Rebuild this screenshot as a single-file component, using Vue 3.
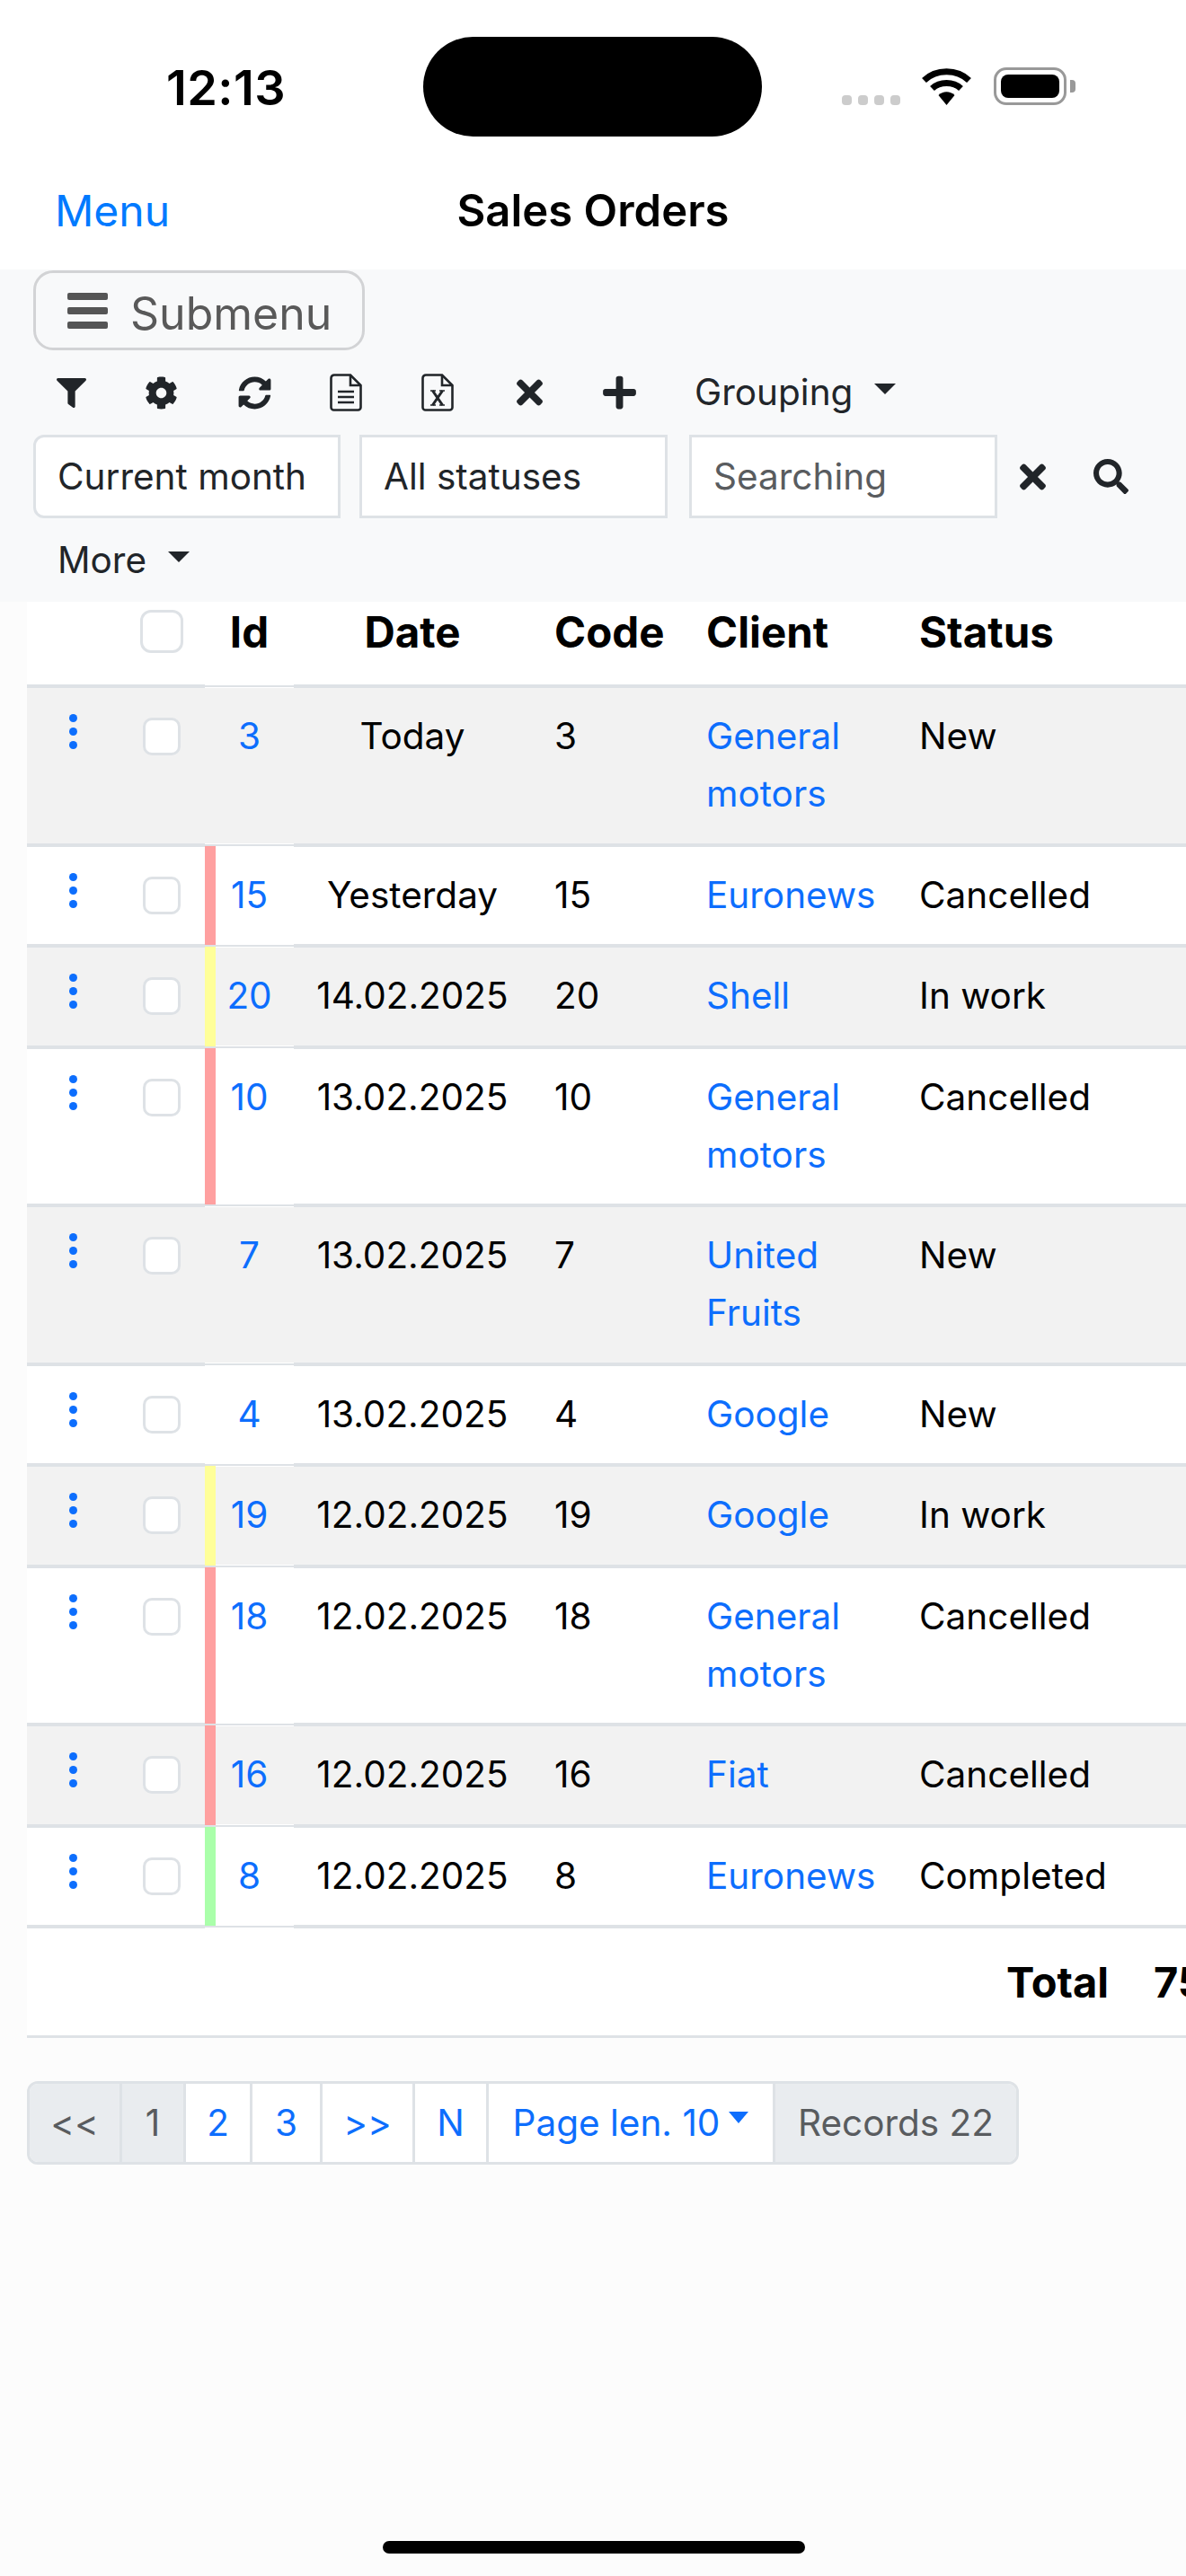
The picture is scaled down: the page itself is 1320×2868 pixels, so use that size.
<script setup>
const icons = {
  filter: { box: '0 0 512 512', d: 'M487.976 0H24.028C2.71 0-8.047 25.866 7.058 40.971L192 225.941V432c0 7.831 3.821 15.17 10.237 19.662l80 55.98C298.02 518.69 320 507.493 320 487.98V225.941l184.947-184.97C520.021 25.896 509.338 0 487.976 0z' },
  cog: { box: '0 0 512 512', d: 'M487.4 315.7l-42.6-24.6c4.3-23.2 4.3-47 0-70.2l42.6-24.6c4.9-2.8 7.1-8.6 5.5-14-11.1-35.6-30-67.8-54.7-94.6-3.8-4.1-10-5.1-14.8-2.3L380.8 110c-17.9-15.4-38.5-27.3-60.8-35.1V25.8c0-5.6-3.9-10.5-9.4-11.7-36.7-8.2-74.3-7.8-109.2 0-5.5 1.2-9.4 6.1-9.4 11.7V75c-22.2 7.9-42.8 19.8-60.8 35.1L88.7 85.5c-4.9-2.8-11-1.9-14.8 2.3-24.7 26.7-43.6 58.9-54.7 94.6-1.7 5.4.6 11.2 5.5 14L67.3 221c-4.3 23.2-4.3 47 0 70.2l-42.6 24.6c-4.9 2.8-7.1 8.6-5.5 14 11.1 35.6 30 67.8 54.7 94.6 3.8 4.1 10 5.1 14.8 2.3l42.6-24.6c17.9 15.4 38.5 27.3 60.8 35.1v49.2c0 5.6 3.9 10.5 9.4 11.7 36.7 8.2 74.3 7.8 109.2 0 5.5-1.2 9.4-6.1 9.4-11.7v-49.2c22.2-7.9 42.8-19.8 60.8-35.1l42.6 24.6c4.9 2.8 11 1.9 14.8-2.3 24.7-26.7 43.6-58.9 54.7-94.6 1.5-5.5-.7-11.3-5.6-14.1zM256 336c-44.1 0-80-35.9-80-80s35.9-80 80-80 80 35.9 80 80-35.9 80-80 80z' },
  sync: { box: '0 0 512 512', d: 'M370.72 133.28C339.458 104.008 298.888 87.962 255.848 88c-77.458.068-144.328 53.178-162.791 126.85-1.344 5.363-6.122 9.15-11.651 9.15H24.103c-7.498 0-13.194-6.807-11.807-14.176C33.933 94.924 134.813 8 256 8c66.448 0 126.791 26.136 171.315 68.685L463.03 40.97C478.149 25.851 504 36.559 504 57.941V192c0 13.255-10.745 24-24 24H345.941c-21.382 0-32.09-25.851-16.971-40.971l41.75-41.749zM32 296h134.059c21.382 0 32.09 25.851 16.971 40.971l-41.75 41.75c31.262 29.273 71.835 45.319 114.876 45.28 77.418-.07 144.315-53.144 162.787-126.849 1.344-5.363 6.122-9.15 11.651-9.15h57.304c7.498 0 13.194 6.807 11.807 14.176C478.067 417.076 377.187 504 256 504c-66.448 0-126.791-26.136-171.315-68.685L48.97 471.03C33.851 486.149 8 475.441 8 454.059V320c0-13.255 10.745-24 24-24z' },
  times: { box: '0 0 352 512', d: 'M242.72 256l100.07-100.07c12.28-12.28 12.28-32.19 0-44.48l-22.24-22.24c-12.28-12.28-32.19-12.28-44.48 0L176 189.28 75.93 89.21c-12.28-12.28-32.19-12.28-44.48 0L9.21 111.45c-12.28 12.28-12.28 32.19 0 44.48L109.28 256 9.21 356.07c-12.28 12.28-12.28 32.19 0 44.48l22.24 22.24c12.28 12.28 32.2 12.28 44.48 0L176 322.72l100.07 100.07c12.28 12.28 32.2 12.28 44.48 0l22.24-22.24c12.28-12.28 12.28-32.19 0-44.48L242.72 256z' },
  plus: { box: '0 0 448 512', d: 'M416 208H272V64c0-17.67-14.33-32-32-32h-32c-17.67 0-32 14.33-32 32v144H32c-17.67 0-32 14.33-32 32v32c0 17.67 14.33 32 32 32h144v144c0 17.67 14.33 32 32 32h32c17.67 0 32-14.33 32-32V304h144c17.67 0 32-14.33 32-32v-32c0-17.67-14.33-32-32-32z' },
  search: { box: '0 0 512 512', d: 'M505 442.7L405.3 343c-4.5-4.5-10.6-7-17-7H372c27.6-35.3 44-79.7 44-128C416 93.1 322.9 0 208 0S0 93.1 0 208s93.1 208 208 208c48.3 0 92.7-16.4 128-44v16.3c0 6.4 2.5 12.5 7 17l99.7 99.7c9.4 9.4 24.6 9.4 33.9 0l28.3-28.3c9.4-9.4 9.4-24.6.1-34zM208 336c-70.7 0-128-57.2-128-128 0-70.7 57.2-128 128-128 70.7 0 128 57.2 128 128 0 70.7-57.2 128-128 128z' },
}

const rows = [
  { id: 3, date: 'Today', client: 'General motors', status: 'New', mark: '' },
  { id: 15, date: 'Yesterday', client: 'Euronews', status: 'Cancelled', mark: 'red' },
  { id: 20, date: '14.02.2025', client: 'Shell', status: 'In work', mark: 'yellow' },
  { id: 10, date: '13.02.2025', client: 'General motors', status: 'Cancelled', mark: 'red' },
  { id: 7, date: '13.02.2025', client: 'United Fruits', status: 'New', mark: '' },
  { id: 4, date: '13.02.2025', client: 'Google', status: 'New', mark: '' },
  { id: 19, date: '12.02.2025', client: 'Google', status: 'In work', mark: 'yellow' },
  { id: 18, date: '12.02.2025', client: 'General motors', status: 'Cancelled', mark: 'red' },
  { id: 16, date: '12.02.2025', client: 'Fiat', status: 'Cancelled', mark: 'red' },
  { id: 8, date: '12.02.2025', client: 'Euronews', status: 'Completed', mark: 'green' },
]

const pages = [
  { label: '<<', cls: 'off', w: 103 },
  { label: '1', cls: 'off', w: 71 },
  { label: '2', cls: '', w: 74 },
  { label: '3', cls: '', w: 78 },
  { label: '>>', cls: '', w: 103 },
  { label: 'N', cls: '', w: 82 },
]
</script>

<template>
  <div class="page">
    <div class="status-bar">
      <span class="time">12:13</span>
      <div class="island"></div>
      <div class="signal"><i></i><i></i><i></i><i></i></div>
      <svg class="wifi" viewBox="0 0 57 42" aria-hidden="true">
        <path d="M3.5 14.5C17 1.5 40 1.5 53.5 14.5" fill="none" stroke="#000" stroke-width="7" />
        <path d="M12.5 23.5C21 15.5 36 15.5 44.5 23.5" fill="none" stroke="#000" stroke-width="7" />
        <path d="M19.5 31C24.5 26 32.5 26 37.5 31L28.5 42Z" fill="#000" />
      </svg>
      <div class="battery"><div class="battery-fill"></div></div>
      <div class="battery-cap"></div>
    </div>

    <div class="nav">
      <a class="nav-menu">Menu</a>
      <span class="nav-title">Sales Orders</span>
    </div>

    <div class="toolbar">
      <button class="submenu">
        <span class="burger"><i></i><i></i><i></i></span>
        <span class="submenu-label">Submenu</span>
      </button>

      <div class="tools">
        <span class="tool"><svg class="ic-33" :viewBox="icons.filter.box"><path :d="icons.filter.d" /></svg></span>
        <span class="tool"><svg class="ic-37 nudge" :viewBox="icons.cog.box"><path :d="icons.cog.d" /></svg></span>
        <span class="tool"><svg class="ic-37" :viewBox="icons.sync.box"><path :d="icons.sync.d" /></svg></span>
        <span class="tool">
          <svg class="doc" viewBox="0 0 36 42">
            <path d="M5 1.5H23L34.5 13V37.5a3 3 0 0 1-3 3H4.500a3 3 0 0 1-3-3V5a3.500 3.500 0 0 1 3.500-3.500Z" fill="none" stroke="#212529" stroke-width="2.600" />
            <path d="M23 1.500V13H34.500" fill="none" stroke="#212529" stroke-width="2.600" />
            <path d="M9 20H27M9 26H27M9 32H27" stroke="#212529" stroke-width="2.600" />
          </svg>
        </span>
        <span class="tool">
          <svg class="doc" viewBox="0 0 36 42">
            <path d="M5 1.5H23L34.5 13V37.5a3 3 0 0 1-3 3H4.500a3 3 0 0 1-3-3V5a3.500 3.500 0 0 1 3.500-3.500Z" fill="none" stroke="#212529" stroke-width="2.600" />
            <path d="M23 1.500V13H34.500" fill="none" stroke="#212529" stroke-width="2.600" />
            <path d="M12.500 19L23.500 35M23.500 19L12.500 35" stroke="#212529" stroke-width="3" />
            <path d="M10 19H16M20 19H26M10 35H16M20 35H26" stroke="#212529" stroke-width="1.600" />
          </svg>
        </span>
        <span class="tool"><svg class="ic-x" :viewBox="icons.times.box"><path :d="icons.times.d" /></svg></span>
        <span class="tool"><svg class="ic-plus nudge" :viewBox="icons.plus.box"><path :d="icons.plus.d" /></svg></span>
        <button class="drop grouping">Grouping<i class="caret"></i></button>
      </div>

      <div class="filters">
        <div class="field first">Current month</div>
        <div class="field second">All statuses</div>
        <div class="field third placeholder">Searching</div>
        <span class="clear"><svg class="ic-x2" :viewBox="icons.times.box"><path :d="icons.times.d" /></svg></span>
        <span class="find"><svg class="ic-search" :viewBox="icons.search.box"><path :d="icons.search.d" /></svg></span>
      </div>

      <div class="more-row">
        <button class="drop">More<i class="caret"></i></button>
      </div>
    </div>

    <div class="table">
      <div class="row head">
        <div class="c-act"></div>
        <div class="c-chk"><span class="check big"></span></div>
        <div class="c-id">Id</div>
        <div class="c-date">Date</div>
        <div class="c-code">Code</div>
        <div class="c-client">Client</div>
        <div class="c-status">Status</div>
      </div>

      <div v-for="(r, i) in rows" :key="r.id" class="row body" :class="{ striped: i % 2 === 0 }">
        <div class="c-act">
          <span class="dots"><i></i><i></i><i></i></span>
        </div>
        <div class="c-chk"><span class="check"></span></div>
        <div class="c-id" :class="r.mark"><a>{{ r.id }}</a></div>
        <div class="c-date">{{ r.date }}</div>
        <div class="c-code">{{ r.id }}</div>
        <div class="c-client"><a>{{ r.client }}</a></div>
        <div class="c-status">{{ r.status }}</div>
      </div>

      <div class="total">
        <span>Total</span>
        <span class="sum">75</span>
      </div>
    </div>

    <div class="pager">
      <span
        v-for="p in pages"
        :key="p.label"
        class="pg"
        :class="p.cls"
        :style="{ width: p.w + 'px' }"
      >{{ p.label }}</span>
      <span class="pg len">Page len. 10<i class="caret blue"></i></span>
      <span class="pg off rec">Records 22</span>
    </div>

    <div class="home"></div>
  </div>
</template>

<style>
html, body { margin: 0; background: #fcfcfc; }
</style>

<style scoped>
* { box-sizing: border-box; }
.page {
  width: 1320px;
  height: 2868px;
  overflow: hidden;
  display: flex;
  flex-direction: column;
  background: #fcfcfc;
  font-family: Inter, "Liberation Sans", sans-serif;
  font-size: 40.5px;
  color: #000;
}
button { font: inherit; background: none; border: 0; padding: 0; color: inherit; }
i { display: block; }

/* status bar */
.status-bar { height: 180px; background: #fff; display: flex; align-items: flex-start; flex: none; }
.time { margin: 66px 0 0 185px; width: 286px; font-size: 54px; line-height: 64px; font-weight: 600; letter-spacing: 0.4px; }
.island { width: 377px; height: 111px; margin-top: 41px; border-radius: 56px; background: #000; }
.signal { display: flex; gap: 7px; margin: 106px 0 0 89px; }
.signal i { width: 11px; height: 11px; border-radius: 4px; background: #ccc; }
.wifi { width: 57px; height: 42px; margin: 75px 0 0 23px; }
.battery { width: 81px; height: 42px; margin: 75px 0 0 24px; padding: 5px; border: 3px solid #999; border-radius: 14px; }
.battery-fill { width: 100%; height: 100%; border-radius: 8px; background: #000; }
.battery-cap { width: 6px; height: 14px; margin: 89px 0 0 4px; border-radius: 0 4px 4px 0; background: #999; }

/* nav */
.nav { height: 120px; padding-bottom: 10px; background: #fff; display: flex; align-items: center; position: relative; flex: none; }
.nav-menu { margin-left: 61px; font-size: 48px; line-height: 60px; color: #007aff; }
.nav-title { position: absolute; left: 0; right: 0; text-align: center; font-size: 49px; line-height: 60px; font-weight: 600; }

/* toolbar */
.toolbar { height: 370px; padding: 1px 0 0 37px; background: #f8f9fa; color: #212529; flex: none; }
.submenu {
  display: flex; align-items: center; gap: 25px;
  width: 369px; height: 89px; padding-left: 35px;
  border: 3px solid #d2d3d5; border-radius: 22px;
  font-size: 50px; color: #595959;
}
.submenu-label { position: relative; top: 3px; }
.burger { display: flex; flex-direction: column; gap: 8px; width: 45px; }
.burger i { height: 8px; border-radius: 2px; background: #555; }

.tools { display: flex; align-items: center; height: 94px; margin-left: -9px; }
.tool { width: 102px; display: flex; justify-content: center; align-items: center; }
.tool svg { fill: #212529; display: block; }
.ic-33 { width: 33px; height: 33px; }
.ic-37 { width: 37px; height: 37px; }
.nudge { margin-right: 3px; }
.ic-x { width: 29px; height: 42px; }
.ic-plus { width: 37px; height: 42px; }
.doc { width: 36px; height: 42px; }
.drop { display: flex; align-items: center; font-size: 40.5px; line-height: 60px; color: #212529; }
.grouping { margin-left: 31px; }
.caret {
  width: 0; height: 0; margin-left: 24px; margin-top: -8px;
  border-left: 12px solid transparent; border-right: 12px solid transparent; border-top: 12px solid #212529;
}
.caret.blue { margin-left: 10px; margin-top: -12px; border-left-width: 11px; border-right-width: 11px; border-top: 13px solid #0d6efd; }

.filters { display: flex; align-items: center; }
.field {
  height: 93px; width: 343px; padding: 0 24px; line-height: 87px;
  background: #fff; border: 3px solid #dee2e6; white-space: nowrap;
}
.first { width: 342px; border-radius: 12px 0 0 12px; }
.second { margin-left: 21px; }
.third { margin-left: 24px; }
.placeholder { color: #595c5f; }
.clear { width: 79px; display: flex; justify-content: center; }
.find { width: 95px; display: flex; justify-content: center; }
.clear svg, .find svg { fill: #212529; display: block; }
.ic-x2 { width: 29px; height: 42px; }
.ic-search { width: 39px; height: 39px; }
.more-row { height: 93px; display: flex; align-items: center; padding-left: 27px; }

/* table */
.table { margin-left: 30px; background: #fff; overflow: hidden; flex: none; }
.row {
  display: grid;
  grid-template-columns: 108px 90px 99px 264px 179px 237px 313px;
  border-bottom: 4px solid #dee2e6;
}
.head { height: 96px; font-weight: 700; font-size: 47.5px; line-height: 68px; }
.body { line-height: 64px; }
.striped { background: #f2f2f2; }
.body > div { padding: 22px 0 22.5px; }
.c-act { display: flex; justify-content: flex-end; }
.body .c-act { padding: 0; }
.c-chk { display: flex; justify-content: flex-start; padding-left: 21px; }
.head .c-chk { padding: 9px 0 0 18px; }
.body .c-chk { padding: 33px 0 0 21px; }
.c-id, .c-date { text-align: center; }
.c-code { padding-left: 26px !important; }
.c-client, .c-status { padding-left: 16px !important; }
a { color: #0d6efd; }

/* the Id cell draws a thinner rule over the row rule, and its colour mark runs across it */
.c-id { position: relative; }
.c-id::after {
  content: ""; position: absolute; left: 0; right: 0; bottom: -4px; height: 4px;
  background: linear-gradient(#fff 0 1px, #dee2e6 1px 3px, #fff 3px);
}
.c-id.red::before, .c-id.yellow::before, .c-id.green::before {
  content: ""; position: absolute; z-index: 1; left: 0; width: 12px; top: -1px; bottom: -1px;
}
.c-id.red::before { background: #ffa0a0; }
.c-id.yellow::before { background: #ffff99; }
.c-id.green::before { background: #aaffaa; }

.check { display: block; width: 42px; height: 42px; border: 3px solid #dee2e6; border-radius: 10px; background: #fff; }
.check.big { width: 48px; height: 48px; border-width: 3.5px; border-radius: 12px; }
.dots { display: flex; flex-direction: column; gap: 6px; margin: 29px 52.5px 0 0; }
.dots i { width: 9px; height: 9px; border-radius: 50%; background: #0d6efd; }
.total {
  display: flex; justify-content: flex-end; align-items: center;
  height: 122px; width: 1320px;
  border-bottom: 3px solid #dee2e6;
  font-weight: 700; font-size: 47px;
}
.sum { width: 66px; margin-left: 50px; white-space: nowrap; }

/* pager */
.pager {
  display: flex; width: 1104px; height: 93px; margin: 48px 0 0 30px;
  border: 3px solid #dee2e6; border-radius: 12px; overflow: hidden; flex: none;
}
.pg {
  display: flex; align-items: center; justify-content: center; flex: none;
  background: #fff; color: #0d6efd; border-right: 3px solid #dee2e6; white-space: nowrap;
}
.pg.off { background: #e9ecef; color: #595c5f; }
.len { width: 319px; }
.pg.rec { flex: 1; border-right: 0; }

.home { width: 470px; height: 14px; margin: auto 0 25px 426px; border-radius: 7px; background: #000; flex: none; }
</style>
